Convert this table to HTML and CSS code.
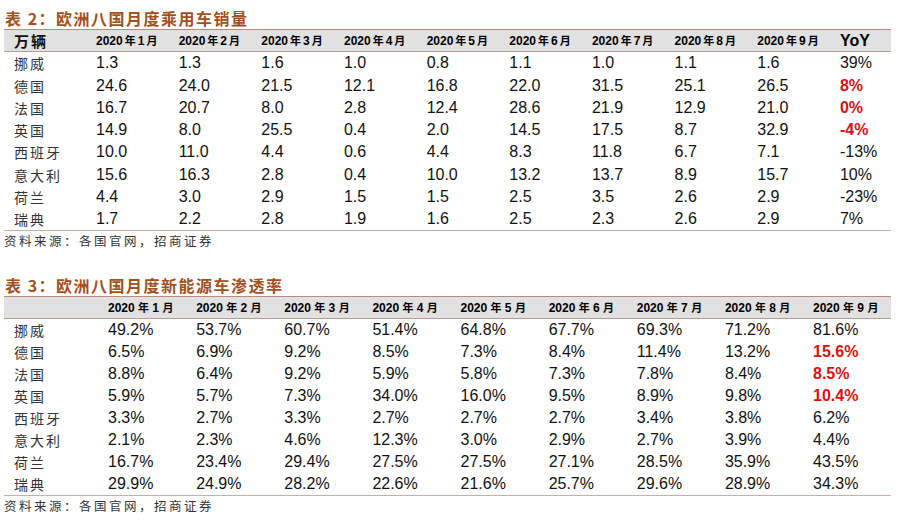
FILE: index.html
```html
<!DOCTYPE html>
<html lang="zh">
<head>
<meta charset="utf-8">
<link rel="stylesheet" href="styles.css">
</head>
<body>
<div class="page">
  <div class="title">表 2：欧洲八国月度乘用车销量</div>
  <div class="table t1">
    <div class="hd lbl unit">万辆</div>
    <div class="hd">2020<span class="cj">年</span>1<span class="cj">月</span></div>
    <div class="hd">2020<span class="cj">年</span>2<span class="cj">月</span></div>
    <div class="hd">2020<span class="cj">年</span>3<span class="cj">月</span></div>
    <div class="hd">2020<span class="cj">年</span>4<span class="cj">月</span></div>
    <div class="hd">2020<span class="cj">年</span>5<span class="cj">月</span></div>
    <div class="hd">2020<span class="cj">年</span>6<span class="cj">月</span></div>
    <div class="hd">2020<span class="cj">年</span>7<span class="cj">月</span></div>
    <div class="hd">2020<span class="cj">年</span>8<span class="cj">月</span></div>
    <div class="hd">2020<span class="cj">年</span>9<span class="cj">月</span></div>
    <div class="hd yoy">YoY</div>

    <div class="lbl">挪威</div><div>1.3</div><div>1.3</div><div>1.6</div><div>1.0</div><div>0.8</div><div>1.1</div><div>1.0</div><div>1.1</div><div>1.6</div><div>39%</div>
    <div class="lbl">德国</div><div>24.6</div><div>24.0</div><div>21.5</div><div>12.1</div><div>16.8</div><div>22.0</div><div>31.5</div><div>25.1</div><div>26.5</div><div class="red">8%</div>
    <div class="lbl">法国</div><div>16.7</div><div>20.7</div><div>8.0</div><div>2.8</div><div>12.4</div><div>28.6</div><div>21.9</div><div>12.9</div><div>21.0</div><div class="red">0%</div>
    <div class="lbl">英国</div><div>14.9</div><div>8.0</div><div>25.5</div><div>0.4</div><div>2.0</div><div>14.5</div><div>17.5</div><div>8.7</div><div>32.9</div><div class="red">-4%</div>
    <div class="lbl">西班牙</div><div>10.0</div><div>11.0</div><div>4.4</div><div>0.6</div><div>4.4</div><div>8.3</div><div>11.8</div><div>6.7</div><div>7.1</div><div>-13%</div>
    <div class="lbl">意大利</div><div>15.6</div><div>16.3</div><div>2.8</div><div>0.4</div><div>10.0</div><div>13.2</div><div>13.7</div><div>8.9</div><div>15.7</div><div>10%</div>
    <div class="lbl">荷兰</div><div>4.4</div><div>3.0</div><div>2.9</div><div>1.5</div><div>1.5</div><div>2.5</div><div>3.5</div><div>2.6</div><div>2.9</div><div>-23%</div>
    <div class="lbl">瑞典</div><div>1.7</div><div>2.2</div><div>2.8</div><div>1.9</div><div>1.6</div><div>2.5</div><div>2.3</div><div>2.6</div><div>2.9</div><div>7%</div>
  </div>
  <div class="source s1">资料来源：各国官网，招商证券</div>

  <div class="title">表 3：欧洲八国月度新能源车渗透率</div>
  <div class="table t2">
    <div class="hd lbl"></div>
    <div class="hd">2020 <span class="cj">年</span> 1 <span class="cj">月</span></div>
    <div class="hd">2020 <span class="cj">年</span> 2 <span class="cj">月</span></div>
    <div class="hd">2020 <span class="cj">年</span> 3 <span class="cj">月</span></div>
    <div class="hd">2020 <span class="cj">年</span> 4 <span class="cj">月</span></div>
    <div class="hd">2020 <span class="cj">年</span> 5 <span class="cj">月</span></div>
    <div class="hd">2020 <span class="cj">年</span> 6 <span class="cj">月</span></div>
    <div class="hd">2020 <span class="cj">年</span> 7 <span class="cj">月</span></div>
    <div class="hd">2020 <span class="cj">年</span> 8 <span class="cj">月</span></div>
    <div class="hd">2020 <span class="cj">年</span> 9 <span class="cj">月</span></div>

    <div class="lbl">挪威</div><div>49.2%</div><div>53.7%</div><div>60.7%</div><div>51.4%</div><div>64.8%</div><div>67.7%</div><div>69.3%</div><div>71.2%</div><div>81.6%</div>
    <div class="lbl">德国</div><div>6.5%</div><div>6.9%</div><div>9.2%</div><div>8.5%</div><div>7.3%</div><div>8.4%</div><div>11.4%</div><div>13.2%</div><div class="red">15.6%</div>
    <div class="lbl">法国</div><div>8.8%</div><div>6.4%</div><div>9.2%</div><div>5.9%</div><div>5.8%</div><div>7.3%</div><div>7.8%</div><div>8.4%</div><div class="red">8.5%</div>
    <div class="lbl">英国</div><div>5.9%</div><div>5.7%</div><div>7.3%</div><div>34.0%</div><div>16.0%</div><div>9.5%</div><div>8.9%</div><div>9.8%</div><div class="red">10.4%</div>
    <div class="lbl">西班牙</div><div>3.3%</div><div>2.7%</div><div>3.3%</div><div>2.7%</div><div>2.7%</div><div>2.7%</div><div>3.4%</div><div>3.8%</div><div>6.2%</div>
    <div class="lbl">意大利</div><div>2.1%</div><div>2.3%</div><div>4.6%</div><div>12.3%</div><div>3.0%</div><div>2.9%</div><div>2.7%</div><div>3.9%</div><div>4.4%</div>
    <div class="lbl">荷兰</div><div>16.7%</div><div>23.4%</div><div>29.4%</div><div>27.5%</div><div>27.5%</div><div>27.1%</div><div>28.5%</div><div>35.9%</div><div>43.5%</div>
    <div class="lbl">瑞典</div><div>29.9%</div><div>24.9%</div><div>28.2%</div><div>22.6%</div><div>21.6%</div><div>25.7%</div><div>29.6%</div><div>28.9%</div><div>34.3%</div>
  </div>
  <div class="source">资料来源：各国官网，招商证券</div>
</div>
</body>
</html>
```

FILE: styles.css
```css
html, body {
  margin: 0;
  padding: 0;
  background: #ffffff;
}

.page {
  width: 887px;
  padding: 7px 0 0 4px;
  font-family: "Liberation Sans", Arial, "Noto Sans CJK SC", sans-serif;
  color: #111;
}

.title {
  height: 22px;
  line-height: 22px;
  padding-left: 1px;
  font-family: "Noto Sans CJK SC", sans-serif;
  font-weight: 700;
  font-size: 16px;
  letter-spacing: 1.5px;
  color: #a4501c;
}

.table {
  display: grid;
  border-top: 1px solid #b88a80;
  border-bottom: 1px solid #d2aaa8;
}

.t1 {
  grid-template-columns: 92px repeat(9, 82.67px) 1fr;
  grid-auto-rows: 22.25px;
}

.t2 {
  grid-template-columns: 104px repeat(8, 88.125px) 1fr;
  grid-auto-rows: 22px;
}

.table > div {
  font-size: 16px;
  line-height: 22px;
  white-space: nowrap;
}

.table > .hd {
  background: #e1e1e1;
  font-weight: 700;
  font-size: 12px;
  line-height: 21px;
  border-bottom: 1px solid #c39890;
  color: #000;
}

.cj {
  font-family: "Noto Sans CJK SC", sans-serif;
  font-weight: 700;
  font-size: 11px;
  padding: 0 2px;
}

.t2 .cj {
  padding: 0;
}

.table > .lbl {
  padding-left: 10px;
  font-family: "Noto Sans CJK SC", sans-serif;
  font-size: 14px;
  letter-spacing: 2px;
  color: #333;
  font-weight: 400;
}

.table > .hd.unit {
  font-size: 15px;
  font-weight: 700;
  color: #111;
}

.table > .hd.yoy {
  font-size: 16px;
}

.table > .red {
  color: #e01010;
  font-weight: 700;
}

.source {
  height: 20px;
  line-height: 20px;
  font-family: "Noto Sans CJK SC", sans-serif;
  font-size: 12.5px;
  letter-spacing: 2.5px;
  color: #333;
}

.s1 {
  margin-bottom: 23px;
}
```
